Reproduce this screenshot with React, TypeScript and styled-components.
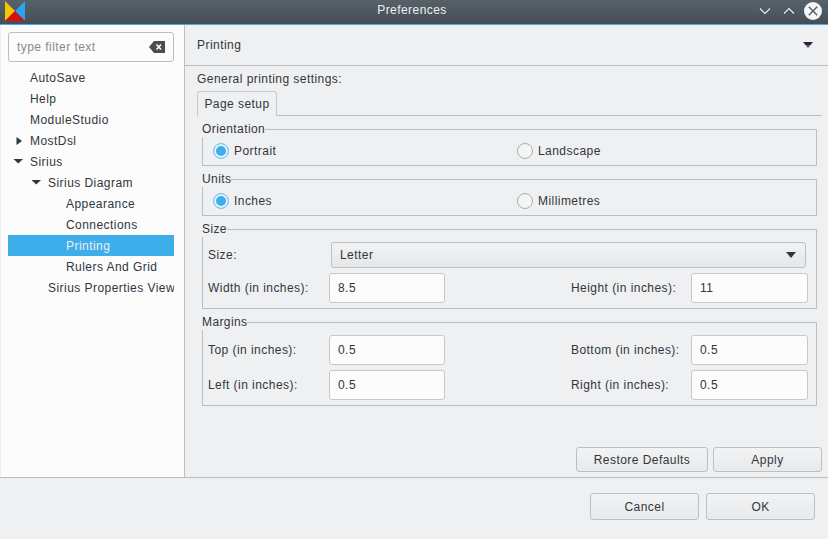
import React from "react";
import styled, { createGlobalStyle } from "styled-components";

const GlobalStyle = createGlobalStyle`
  html, body { margin: 0; padding: 0; }
  body {
    width: 828px;
    height: 539px;
    overflow: hidden;
    background: #eff0f2;
    color: #31363b;
    font: 12px/15px "Liberation Sans", Arial, sans-serif;
    letter-spacing: 0.45px;
  }
  * { box-sizing: border-box; }
`;

const Window = styled.div`
  width: 828px;
  height: 539px;
  display: flex;
  flex-direction: column;
`;

const TitleBar = styled.header`
  height: 25px;
  flex: none;
  display: flex;
  align-items: center;
  position: relative;
  background: linear-gradient(#56616a, #454e56);
  border-bottom: 1px solid #3daee9;
  padding: 0 6px 3px 5px;
  color: #eff0f1;
`;

const TitleText = styled.span`
  position: absolute;
  left: 0;
  right: 4px;
  text-align: center;
  top: 3px;
  font-size: 12px;
`;

const TitleButtons = styled.div`
  margin-left: auto;
  display: flex;
  align-items: center;
  gap: 10px;
  position: relative;

  svg:last-child {
    margin-left: -2px;
  }
`;

const Main = styled.div`
  height: 453px;
  flex: none;
  display: flex;
  border-bottom: 1px solid #bcbebf;
`;

const Sidebar = styled.nav`
  width: 185px;
  flex: none;
  background: #fcfcfc;
  border-left: 1px solid #eff0f2;
  border-right: 1px solid #bcbebf;
  padding: 7px 10px 0 7px;
`;

const Filter = styled.div`
  height: 30px;
  display: flex;
  align-items: center;
  justify-content: space-between;
  padding: 0 8px 0 8px;
  background: #fcfcfc;
  border: 1px solid #bcbebf;
  border-radius: 3px;
  color: #888b8e;
  margin-bottom: 5px;
`;

const Tree = styled.ul`
  list-style: none;
  margin: 0;
  padding: 0;
`;

const TreeRow = styled.li<{ $depth: number; $selected?: boolean }>`
  height: 21px;
  display: flex;
  align-items: center;
  position: relative;
  white-space: nowrap;
  overflow: hidden;
  padding: 1px 0 0 ${(p) => 22 + p.$depth * 18}px;
  background: ${(p) => (p.$selected ? "#3daee9" : "transparent")};
  color: ${(p) => (p.$selected ? "#eff0f1" : "#31363b")};
`;

const Arrow = styled.svg<{ $depth: number }>`
  position: absolute;
  top: 5px;
  left: ${(p) => 5 + p.$depth * 18}px;
`;

const Content = styled.section`
  flex: 1;
  min-width: 0;
  display: flex;
  flex-direction: column;
`;

const PageHeader = styled.div`
  height: 41px;
  flex: none;
  display: flex;
  align-items: center;
  justify-content: space-between;
  padding: 0 15px 0 12px;
  border-bottom: 1px solid #bcbebf;
`;

const PageBody = styled.div`
  flex: 1;
  display: flex;
  flex-direction: column;
  padding: 3px 6px 5px 12px;
`;

const Intro = styled.div`
  height: 20px;
  display: flex;
  align-items: center;
`;

const TabStrip = styled.div`
  height: 25px;
  margin-top: 2px;
  display: flex;
  align-items: flex-end;
  border-bottom: 1px solid #bcbebf;
`;

const Tab = styled.div`
  width: 80px;
  height: 25px;
  margin-bottom: -1px;
  padding-top: 5px;
  text-align: center;
  background: #eff0f2;
  border: 1px solid #c6c8c9;
  border-bottom: none;
  border-radius: 3px 3px 0 0;
`;

const Groups = styled.div`
  display: flex;
  flex-direction: column;
  gap: 6px;
  margin: 6px 5px 0 5px;
`;

const Group = styled.fieldset<{ $height: number }>`
  margin: 0;
  padding: 0 5px;
  height: ${(p) => p.$height}px;
  border: 1px solid #bcbebf;
  min-width: 0;
`;

const Legend = styled.legend`
  padding: 0;
  margin-left: -6px;
  line-height: 15px;
  letter-spacing: 0.4px;
`;

const RadioRow = styled.div`
  display: grid;
  grid-template-columns: 304px 1fr;
  padding: 4px 0 0 5px;
`;

const RadioLabel = styled.label`
  display: flex;
  align-items: center;
  gap: 5px;
  height: 20px;
`;

const Radio = styled.span<{ $checked?: boolean }>`
  width: 16px;
  height: 16px;
  border-radius: 50%;
  background: ${(p) => (p.$checked ? "#3daee9" : "#f4f5f5")};
  border: 1px solid ${(p) => (p.$checked ? "#7cc7ee" : "#a9abad")};
  box-shadow: ${(p) => (p.$checked ? "inset 0 0 0 2px #e8f5fc" : "none")};
`;

const FieldGrid = styled.div<{ $top: number }>`
  display: grid;
  grid-template-columns: 121px 116px 126px 120px 117px;
  row-gap: 5px;
  align-items: center;
  padding-top: ${(p) => p.$top}px;
`;

const FieldLabel = styled.span`
  white-space: nowrap;
`;

const Input = styled.div`
  height: 30px;
  display: flex;
  align-items: center;
  padding-left: 8px;
  background: #fcfcfc;
  border: 1px solid #c6c8c9;
  border-radius: 3px;
`;

const TrailingSpacer = styled.span`
  grid-column: 3;
`;

const Select = styled.div`
  grid-column: 2 / 6;
  height: 26px;
  margin: 0 2px;
  display: flex;
  align-items: center;
  justify-content: space-between;
  padding: 0 9px 0 8px;
  background: linear-gradient(#f1f2f3, #e6e7e9);
  border: 1px solid #bcbebf;
  border-radius: 3px;
`;

const PageActions = styled.div`
  margin-top: auto;
  display: flex;
  justify-content: flex-end;
  gap: 5px;
`;

const Button = styled.button<{ $width: number; $height: number }>`
  width: ${(p) => p.$width}px;
  height: ${(p) => p.$height}px;
  padding: 1px 0 0;
  font: inherit;
  letter-spacing: inherit;
  color: inherit;
  background: linear-gradient(#f2f3f4, #e8e9eb);
  border: 1px solid #bcbebf;
  border-radius: 3px;
`;

const Footer = styled.footer`
  flex: 1;
  display: flex;
  justify-content: flex-end;
  gap: 7px;
  padding: 15px 13px 0 0;
`;

const Logo = () => (
  <svg width="20" height="20" viewBox="0 0 20 20">
    <polygon points="0,0 10,10 0,20" fill="#f6c700" />
    <polygon points="20,0 10,10 20,20" fill="#2aa5ea" />
    <polygon points="0,20 10,10 20,20" fill="#d81010" />
  </svg>
);

const Minimize = () => (
  <svg width="14" height="14" viewBox="0 0 14 14" fill="none" stroke="#eff0f1" strokeWidth="1.1">
    <path d="M2 4.5l5 5 5-5" />
  </svg>
);

const Maximize = () => (
  <svg width="14" height="14" viewBox="0 0 14 14" fill="none" stroke="#eff0f1" strokeWidth="1.1">
    <path d="M2 9.5l5-5 5 5" />
  </svg>
);

const Close = () => (
  <svg width="18" height="18" viewBox="0 0 18 18">
    <circle cx="9" cy="9" r="9" fill="#f4f5f5" />
    <path d="M4.8 4.8l8.4 8.4M13.2 4.8l-8.4 8.4" stroke="#4c555d" strokeWidth="1.3" />
  </svg>
);

const ClearIcon = () => (
  <svg width="16" height="12" viewBox="0 0 16 12">
    <path d="M5 0h11v12H5L0 6z" fill="#4d4d4d" />
    <path d="M7.5 3.5l4.5 5M12 3.5l-4.5 5" stroke="#fcfcfc" strokeWidth="1.6" />
  </svg>
);

const DownTriangle = ({ color }: { color: string }) => (
  <svg width="10" height="6" viewBox="0 0 10 6">
    <polygon points="0,0 10,0 5,6" fill={color} />
  </svg>
);

const HeaderTriangle = () => (
  <svg width="10" height="6" viewBox="0 0 10 6">
    <polygon points="0,0 10,0 7,3.5 3,3.5" fill="#26262b" />
    <polygon points="3,3.5 7,3.5 5,6" fill="#5b2d8c" />
  </svg>
);

const treeItems = [
  { label: "AutoSave", depth: 0 },
  { label: "Help", depth: 0 },
  { label: "ModuleStudio", depth: 0 },
  { label: "MostDsl", depth: 0, arrow: "right" },
  { label: "Sirius", depth: 0, arrow: "down" },
  { label: "Sirius Diagram", depth: 1, arrow: "down" },
  { label: "Appearance", depth: 2 },
  { label: "Connections", depth: 2 },
  { label: "Printing", depth: 2, selected: true },
  { label: "Rulers And Grid", depth: 2 },
  { label: "Sirius Properties View", depth: 1 },
];

export default function App() {
  return (
    <Window>
      <GlobalStyle />
      <TitleBar>
        <Logo />
        <TitleText>Preferences</TitleText>
        <TitleButtons>
          <Minimize />
          <Maximize />
          <Close />
        </TitleButtons>
      </TitleBar>
      <Main>
        <Sidebar>
          <Filter>
            type filter text
            <ClearIcon />
          </Filter>
          <Tree>
            {treeItems.map((item) => (
              <TreeRow key={item.label} $depth={item.depth} $selected={item.selected}>
                {item.arrow && (
                  <Arrow $depth={item.depth} width="11" height="11" viewBox="0 0 11 11">
                    {item.arrow === "right" ? (
                      <polygon points="3.5,2 9,6 3.5,10" fill="#31363b" />
                    ) : (
                      <polygon points="0.5,3 10,3 5.25,7.5" fill="#31363b" />
                    )}
                  </Arrow>
                )}
                {item.label}
              </TreeRow>
            ))}
          </Tree>
        </Sidebar>
        <Content>
          <PageHeader>
            Printing
            <HeaderTriangle />
          </PageHeader>
          <PageBody>
            <Intro>General printing settings:</Intro>
            <TabStrip>
              <Tab>Page setup</Tab>
            </TabStrip>
            <Groups>
              <Group $height={44}>
                <Legend>Orientation</Legend>
                <RadioRow>
                  <RadioLabel>
                    <Radio $checked />
                    Portrait
                  </RadioLabel>
                  <RadioLabel>
                    <Radio />
                    Landscape
                  </RadioLabel>
                </RadioRow>
              </Group>
              <Group $height={44}>
                <Legend>Units</Legend>
                <RadioRow>
                  <RadioLabel>
                    <Radio $checked />
                    Inches
                  </RadioLabel>
                  <RadioLabel>
                    <Radio />
                    Millimetres
                  </RadioLabel>
                </RadioRow>
              </Group>
              <Group $height={87}>
                <Legend>Size</Legend>
                <FieldGrid $top={5}>
                  <FieldLabel>Size:</FieldLabel>
                  <Select>
                    Letter
                    <DownTriangle color="#31363b" />
                  </Select>
                  <FieldLabel>Width (in inches):</FieldLabel>
                  <Input>8.5</Input>
                  <TrailingSpacer />
                  <FieldLabel>Height (in inches):</FieldLabel>
                  <Input>11</Input>
                </FieldGrid>
              </Group>
              <Group $height={91}>
                <Legend>Margins</Legend>
                <FieldGrid $top={5}>
                  <FieldLabel>Top (in inches):</FieldLabel>
                  <Input>0.5</Input>
                  <TrailingSpacer />
                  <FieldLabel>Bottom (in inches):</FieldLabel>
                  <Input>0.5</Input>
                  <FieldLabel>Left (in inches):</FieldLabel>
                  <Input>0.5</Input>
                  <TrailingSpacer />
                  <FieldLabel>Right (in inches):</FieldLabel>
                  <Input>0.5</Input>
                </FieldGrid>
              </Group>
            </Groups>
            <PageActions>
              <Button $width={132} $height={25}>Restore Defaults</Button>
              <Button $width={109} $height={25}>Apply</Button>
            </PageActions>
          </PageBody>
        </Content>
      </Main>
      <Footer>
        <Button $width={109} $height={27}>Cancel</Button>
        <Button $width={109} $height={27}>OK</Button>
      </Footer>
    </Window>
  );
}
